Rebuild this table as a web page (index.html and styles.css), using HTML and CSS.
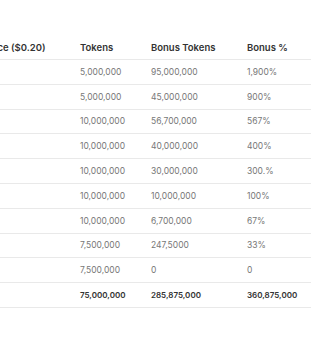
FILE: index.html
```html
<!DOCTYPE html>
<html lang="en">
<head>
  <meta charset="UTF-8" />
  <meta name="viewport" content="width=device-width, initial-scale=1.0"/>
  <title>Token Allocation</title>
  <link rel="stylesheet" href="styles.css">
</head>
<body>
  <div class="table-wrap">
    <table class="bonus-table">
      <thead>
        <tr>
          <th class="col-price">Price ($0.20)</th>
          <th class="col-tokens">Tokens</th>
          <th class="col-bonus">Bonus Tokens</th>
          <th class="col-pct">Bonus %</th>
        </tr>
      </thead>
      <tbody>
        <tr><td></td><td>5,000,000</td><td>95,000,000</td><td>1,900%</td></tr>
        <tr><td></td><td>5,000,000</td><td>45,000,000</td><td>900%</td></tr>
        <tr><td></td><td>10,000,000</td><td>56,700,000</td><td>567%</td></tr>
        <tr><td></td><td>10,000,000</td><td>40,000,000</td><td>400%</td></tr>
        <tr><td></td><td>10,000,000</td><td>30,000,000</td><td>300.%</td></tr>
        <tr><td></td><td>10,000,000</td><td>10,000,000</td><td>100%</td></tr>
        <tr><td></td><td>10,000,000</td><td>6,700,000</td><td>67%</td></tr>
        <tr><td></td><td>7,500,000</td><td>247,5000</td><td>33%</td></tr>
        <tr><td></td><td>7,500,000</td><td>0</td><td>0</td></tr>
        <tr class="total"><td></td><td>75,000,000</td><td>285,875,000</td><td>360,875,000</td></tr>
      </tbody>
    </table>
  </div>
</body>
</html>
```

FILE: styles.css
```css
body {
  margin: 0;
  background: #fff;
  font-family: Inter, "Open Sans", sans-serif;
  overflow: hidden;
}

.table-wrap {
  padding-top: 35px;
  overflow: hidden;
}

.bonus-table {
  border-collapse: collapse;
  margin-left: -15px;
  table-layout: fixed;
  width: 400px;
}

.bonus-table th,
.bonus-table td {
  text-align: left;
  padding: 0;
  border-bottom: 1px solid #e9e9e9;
  white-space: nowrap;
}

.bonus-table th {
  height: 24px;
  font-size: 9.5px;
  font-weight: 600;
  color: #333;
}

.bonus-table td {
  height: 23.8px;
  font-size: 8.5px;
  color: #777;
}

.col-price { width: 95px; }
.col-tokens { width: 71px; }
.col-bonus { width: 96px; }
.col-pct { width: 138px; }

.bonus-table .total td {
  font-size: 8px;
  font-weight: 600;
  color: #333;
}
```
